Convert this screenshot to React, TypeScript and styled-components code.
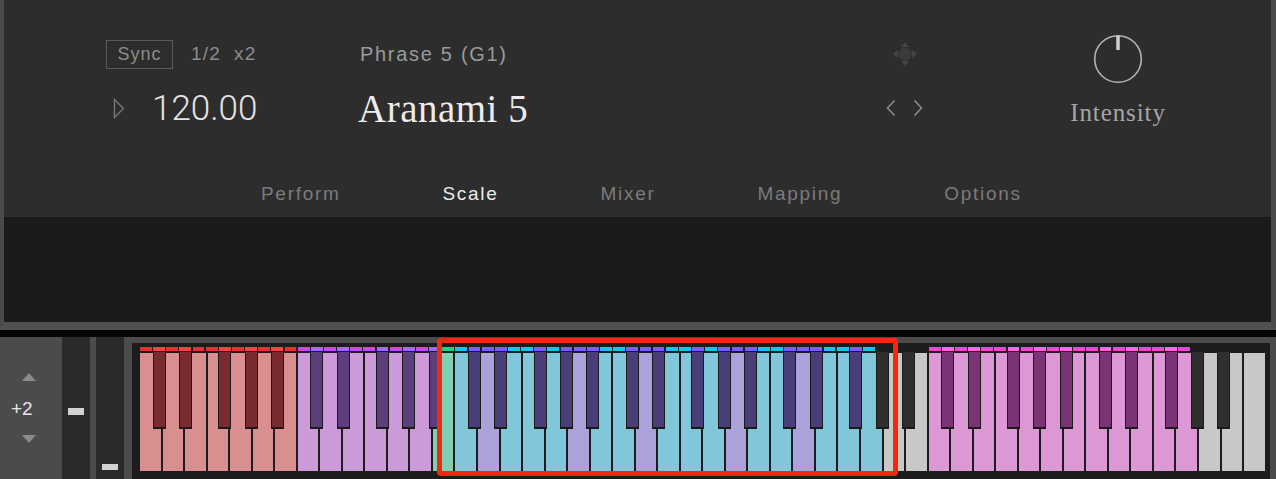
import React from 'react';
import styled, { createGlobalStyle } from 'styled-components';

const GlobalStyle = createGlobalStyle`
  html, body {
    margin: 0;
    padding: 0;
    background: #050505;
  }
  body {
    font-family: "Liberation Sans", Arial, sans-serif;
  }
`;

const Shell = styled.div`
  width: 1276px;
  height: 479px;
  overflow: hidden;
  display: flex;
  flex-direction: column;
  background: #050505;
`;

/* ---------- upper instrument panel ---------- */

const Upper = styled.div`
  height: 330px;
  box-sizing: border-box;
  display: flex;
  flex-direction: column;
  border-left: 4px solid #4a4a4a;
  border-right: 5px solid #4a4a4a;
  border-bottom: 8px solid #505050;
`;

const Header = styled.header`
  height: 217px;
  background: #2d2d2d;
  display: flex;
  flex-direction: column;
`;

const Blank = styled.div`
  flex: 1;
  background: #1b1b1b;
`;

const Controls = styled.div`
  height: 180px;
  display: flex;
  padding-left: 102px;
`;

const Column = styled.div<{ $width?: number; $offset?: number; $center?: boolean }>`
  width: ${(p) => (p.$width ? `${p.$width}px` : 'auto')};
  margin-left: ${(p) => p.$offset ?? 0}px;
  display: flex;
  flex-direction: column;
  align-items: ${(p) => (p.$center ? 'center' : 'flex-start')};
`;

const Line = styled.div<{ $top: number; $height: number }>`
  margin-top: ${(p) => p.$top}px;
  height: ${(p) => p.$height}px;
  display: flex;
  align-items: center;
`;

const SyncBox = styled.div`
  box-sizing: border-box;
  width: 67px;
  height: 29px;
  border: 1px solid #5a5a5a;
  display: flex;
  align-items: center;
  justify-content: center;
  color: #8c8c8c;
  font-size: 18px;
  letter-spacing: 1px;
`;

const Meta = styled.span<{ $gap: number }>`
  margin-left: ${(p) => p.$gap}px;
  color: #8c8c8c;
  font-size: 19px;
  letter-spacing: 1.2px;
`;

const PlayIcon = styled.svg`
  margin-left: 7px;
  display: block;
`;

const Tempo = styled.span`
  margin-left: 27px;
  font-family: Roboto, "Liberation Sans", Arial, sans-serif;
  font-weight: 300;
  font-size: 35px;
  color: #e4e4e4;
`;

const Phrase = styled.span`
  margin-left: 2px;
  color: #9a9a9a;
  font-size: 20px;
  letter-spacing: 1.7px;
`;

const PatchName = styled.span`
  font-family: "Liberation Serif", "Times New Roman", serif;
  font-size: 39px;
  letter-spacing: 0.5px;
  color: #ececec;
`;

const Chevrons = styled.div`
  display: flex;
  gap: 17px;
`;

const KnobLabel = styled.span`
  margin-top: 16px;
  font-family: "Liberation Serif", "Times New Roman", serif;
  font-size: 25px;
  line-height: 25px;
  letter-spacing: 0.9px;
  color: #a6a6a6;
`;

const Tabs = styled.nav`
  height: 37px;
  box-sizing: border-box;
  padding: 4px 0 0 257px;
  display: flex;
  gap: 102px;
`;

const Tab = styled.span<{ $active?: boolean }>`
  font-size: 19px;
  line-height: 19px;
  letter-spacing: 1.7px;
  color: ${(p) => (p.$active ? '#ececec' : '#7b7b7b')};
`;

/* ---------- lower keyboard strip ---------- */

const Gap = styled.div`
  height: 7px;
  background: #050505;
`;

const Lower = styled.div`
  height: 142px;
  display: flex;
  background: #4b4b4b;
`;

const Transpose = styled.div`
  width: 62px;
  box-sizing: border-box;
  padding-top: 36px;
  display: flex;
  flex-direction: column;
  align-items: flex-start;
`;

const Arrow = styled.svg<{ $top?: number }>`
  display: block;
  margin-left: 22px;
  margin-top: ${(p) => p.$top ?? 0}px;
`;

const Octave = styled.span`
  margin: 18px 0 0 11px;
  font-size: 19px;
  line-height: 19px;
  color: #e6e6e6;
`;

const Slot = styled.div<{ $barTop: number; $barHeight: number }>`
  width: 28px;
  background: #2a2a2a;
  position: relative;

  &::after {
    content: '';
    position: absolute;
    left: 6px;
    top: ${(p) => p.$barTop}px;
    width: 16px;
    height: ${(p) => p.$barHeight}px;
    background: #d2d2d2;
  }
`;

const Divider = styled.div`
  width: 6px;
  background: #4b4b4b;
`;

const KeyboardFrame = styled.div`
  flex: 1;
  position: relative;
  padding: 6px 6px 0 8px;
  display: flex;
`;

const Bed = styled.div`
  flex: 1;
  background: #1c1c1c;
  padding: 4px 0 0 8px;
`;

const Keys = styled.div`
  width: 1127px;
`;

const StripRow = styled.div`
  position: relative;
  height: 4px;
  margin-bottom: 2px;
`;

const StripCell = styled.div<{ $color: string }>`
  position: absolute;
  top: 0;
  height: 4px;
  background: ${(p) => p.$color};
`;

const WhiteRow = styled.div`
  position: relative;
  display: flex;
  height: 118px;
`;

const WhiteKey = styled.div<{ $color: string }>`
  flex: none;
  box-sizing: border-box;
  height: 100%;
  border-right: 2px solid #1c1c1c;
  background: ${(p) => p.$color};
`;

const BlackKey = styled.div<{ $color: string }>`
  position: absolute;
  top: -1px;
  width: 13px;
  height: 77px;
  box-sizing: border-box;
  border: 1.5px solid #1a1a1a;
  border-top: none;
  border-bottom-width: 2px;
  background: ${(p) => p.$color};
`;

const Selection = styled.div`
  position: absolute;
  left: 313px;
  top: 1px;
  width: 461px;
  height: 138px;
  box-sizing: border-box;
  border: 5px solid #f2290f;
  border-radius: 4px;
  pointer-events: none;
`;

/* ---------- keyboard data ---------- */

type Zone = { key: string; sharp: string; strip?: string; stripSharp?: string };

const ZONES: Record<string, Zone> = {
  red: { key: '#d98e8f', sharp: '#7a2b2f', strip: '#e23333', stripSharp: '#ea4949' },
  purple: { key: '#cc9ad9', sharp: '#5b3e7b', strip: '#c84ae2', stripSharp: '#a36cf0' },
  green: { key: '#7fcfb3', sharp: '#4a3e78', strip: '#1fd08c', stripSharp: '#1fd08c' },
  cyan: { key: '#80c7d9', sharp: '#4a3e78', strip: '#1ec1ea', stripSharp: '#7b61f0' },
  lavender: { key: '#aba2d9', sharp: '#4a3e78', strip: '#7b61f0', stripSharp: '#7b61f0' },
  pink: { key: '#dc98d5', sharp: '#7a3374', strip: '#e449d9', stripSharp: '#f06ae9' },
  grey: { key: '#c8c8c8', sharp: '#2f2f2f' },
};

const WHITE_W = 22.534;
const SEMI = (WHITE_W * 7) / 12;
const NOTES = 85; // C1 .. C8
const SHARPS = [1, 3, 6, 8, 10];

const zoneOf = (n: number): Zone => {
  const oct = Math.floor(n / 12);
  const s = n % 12;
  if (oct === 0) return ZONES.red;
  if (oct === 1) return s === 11 ? ZONES.green : ZONES.purple;
  if (oct === 2 || oct === 3 || (oct === 4 && s <= 7)) {
    return s === 2 || s === 9 ? ZONES.lavender : ZONES.cyan;
  }
  if (oct === 5 || (oct === 6 && s <= 7)) return ZONES.pink;
  return ZONES.grey;
};

const notes = Array.from({ length: NOTES }, (_, n) => ({
  n,
  sharp: SHARPS.includes(n % 12),
  zone: zoneOf(n),
}));

const Keyboard = () => (
  <Keys>
    <StripRow>
      {notes.map(({ n, sharp, zone }) => {
        const color = sharp ? zone.stripSharp : zone.strip;
        if (!color) return null;
        return <StripCell key={n} $color={color} style={{ left: n * SEMI, width: SEMI - 1.3 }} />;
      })}
    </StripRow>
    <WhiteRow>
      {notes
        .filter((k) => !k.sharp)
        .map(({ n, zone }) => (
          <WhiteKey key={n} $color={zone.key} style={{ width: WHITE_W }} />
        ))}
      {notes
        .filter((k) => k.sharp)
        .map(({ n, zone }) => (
          <BlackKey key={n} $color={zone.sharp} style={{ left: n * SEMI - 0.6 }} />
        ))}
    </WhiteRow>
  </Keys>
);

/* ---------- icons ---------- */

const MoveIcon = () => (
  <svg width="26" height="26" viewBox="0 0 26 26">
    <circle cx="13" cy="13" r="6.5" fill="#3b3b3b" />
    <path d="M13 1 L17 6 L9 6 Z M13 25 L9 20 L17 20 Z M1 13 L6 9 L6 17 Z M25 13 L20 17 L20 9 Z" fill="#444444" />
  </svg>
);

const Chevron = ({ dir }: { dir: 'left' | 'right' }) => (
  <svg width="10" height="18" viewBox="0 0 10 18">
    <polyline
      points={dir === 'left' ? '8.5,1.5 1.5,9 8.5,16.5' : '1.5,1.5 8.5,9 1.5,16.5'}
      fill="none"
      stroke="#8c8c8c"
      strokeWidth="1.5"
    />
  </svg>
);

const Knob = () => (
  <svg width="50" height="50" viewBox="0 0 50 50" style={{ marginTop: 34 }}>
    <circle cx="25" cy="25" r="23.3" fill="none" stroke="#b2b2b2" strokeWidth="1.6" />
    <line x1="25" y1="1.5" x2="25" y2="16" stroke="#cecece" strokeWidth="3.5" />
  </svg>
);

export default function App() {
  return (
    <>
      <GlobalStyle />
      <Shell>
        <Upper>
          <Header>
            <Controls>
              <Column $width={252}>
                <Line $top={39} $height={30}>
                  <SyncBox>Sync</SyncBox>
                  <Meta $gap={18}>1/2</Meta>
                  <Meta $gap={13}>x2</Meta>
                </Line>
                <Line $top={19} $height={40}>
                  <PlayIcon width="12" height="21" viewBox="0 0 12 21">
                    <path d="M1.5 1.5 L10.5 10.5 L1.5 19.5 Z" fill="none" stroke="#7a7a7a" strokeWidth="1.3" />
                  </PlayIcon>
                  <Tempo>120.00</Tempo>
                </Line>
              </Column>
              <Column $width={528}>
                <Line $top={39} $height={30}>
                  <Phrase>Phrase 5 (G1)</Phrase>
                </Line>
                <Line $top={19} $height={40}>
                  <PatchName>Aranami 5</PatchName>
                </Line>
              </Column>
              <Column $width={37} $center>
                <Line $top={39} $height={30}>
                  <MoveIcon />
                </Line>
                <Line $top={19} $height={40}>
                  <Chevrons>
                    <Chevron dir="left" />
                    <Chevron dir="right" />
                  </Chevrons>
                </Line>
              </Column>
              <Column $width={96} $offset={147} $center>
                <Knob />
                <KnobLabel>Intensity</KnobLabel>
              </Column>
            </Controls>
            <Tabs>
              <Tab>Perform</Tab>
              <Tab $active>Scale</Tab>
              <Tab>Mixer</Tab>
              <Tab>Mapping</Tab>
              <Tab>Options</Tab>
            </Tabs>
          </Header>
          <Blank />
        </Upper>
        <Gap />
        <Lower>
          <Transpose>
            <Arrow width="14" height="8" viewBox="0 0 14 8">
              <polygon points="7,0 14,8 0,8" fill="#8a8a8a" />
            </Arrow>
            <Octave>+2</Octave>
            <Arrow width="14" height="8" viewBox="0 0 14 8" $top={17}>
              <polygon points="0,0 14,0 7,8" fill="#8a8a8a" />
            </Arrow>
          </Transpose>
          <Slot $barTop={71} $barHeight={7} />
          <Divider />
          <Slot $barTop={127} $barHeight={6} />
          <KeyboardFrame>
            <Bed>
              <Keyboard />
            </Bed>
            <Selection />
          </KeyboardFrame>
        </Lower>
      </Shell>
    </>
  );
}
